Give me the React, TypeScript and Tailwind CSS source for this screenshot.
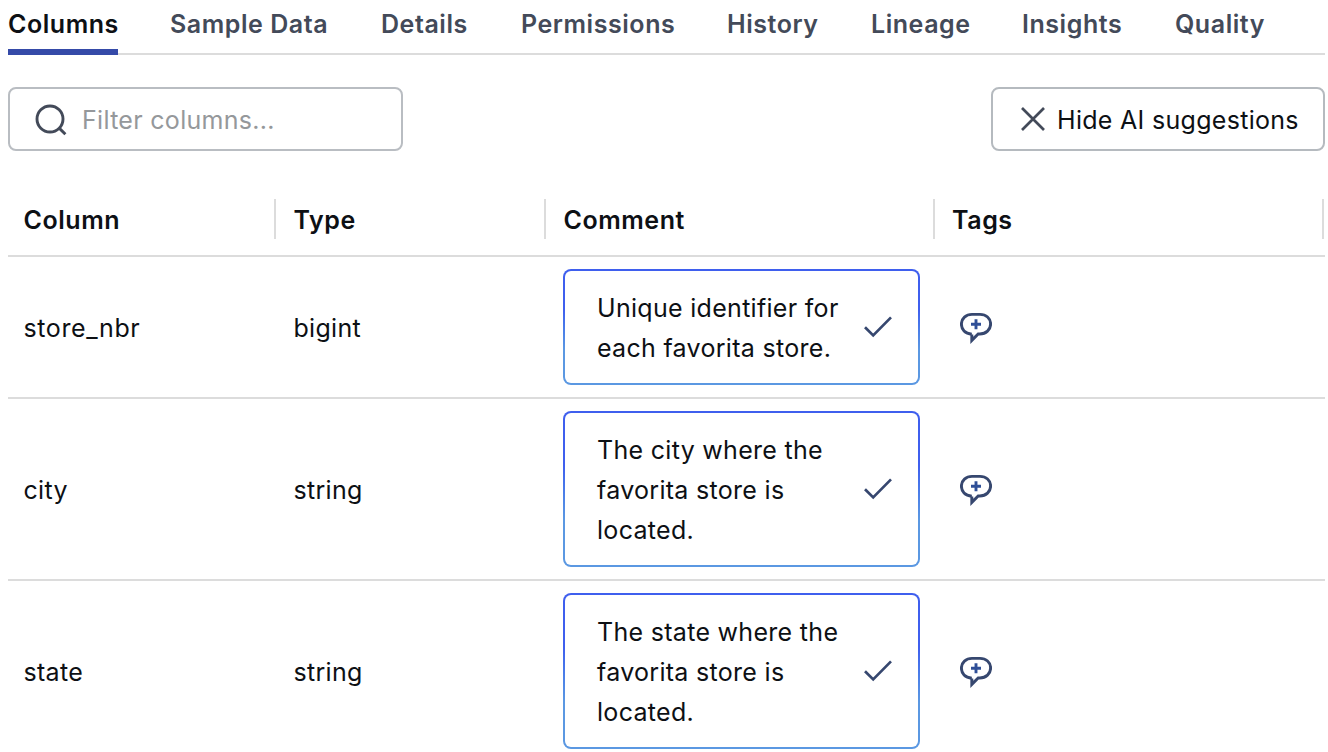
import React from "react";

const tabs = [
  { label: "Columns", width: "w-[110px]", gap: "mr-[52px]", active: true },
  { label: "Sample Data", width: "w-[159px]", gap: "mr-[52px]" },
  { label: "Details", width: "w-[87px]", gap: "mr-[53px]" },
  { label: "Permissions", width: "w-[153px]", gap: "mr-[53px]" },
  { label: "History", width: "w-[91px]", gap: "mr-[53px]" },
  { label: "Lineage", width: "w-[98px]", gap: "mr-[53px]" },
  { label: "Insights", width: "w-[101px]", gap: "mr-[52px]" },
  { label: "Quality", width: "w-[89px]", gap: "" },
];

const rows = [
  { name: "store_nbr", spacing: "tracking-[0.6px]", type: "bigint", lines: ["Unique identifier for", "each favorita store."] },
  { name: "city", spacing: "", type: "string", lines: ["The city where the", "favorita store is", "located."] },
  { name: "state", spacing: "", type: "string", lines: ["The state where the", "favorita store is", "located."] },
];

const columns = "grid grid-cols-[270px_270px_389px_1fr]";

function SearchIcon() {
  return (
    <svg className="mt-0.5 h-8 w-8 shrink-0" viewBox="0 0 32 32" fill="none" stroke="#434a59" strokeWidth="2.9">
      <circle cx="15" cy="15" r="13" />
      <path d="M24.2 24.1 L30.4 30.2" />
    </svg>
  );
}

function CloseIcon() {
  return (
    <svg className="h-6 w-6 shrink-0" viewBox="0 0 24 24" fill="none" stroke="#434a59" strokeWidth="2.7">
      <path d="M1 1 L23 23 M23 1 L1 23" />
    </svg>
  );
}

function CheckIcon() {
  return (
    <svg className="h-[22px] w-7 shrink-0" viewBox="0 0 28 22" fill="none" stroke="#36476f" strokeWidth="2.7">
      <path d="M1 11.2 L9.2 19.4 L27 1.4" />
    </svg>
  );
}

function AddTagIcon() {
  return (
    <svg className="mt-0.5 h-8 w-8" viewBox="0 0 32 32" fill="none" stroke="#36476f" strokeWidth="2.9">
      <path d="M11.8 22.6 V28.4 L18.2 22 H19.8 C26 22 30.6 17.7 30.6 12 C30.6 6.2 26 2.4 20 2.4 H12 C6 2.4 1.4 6.4 1.4 12.1 C1.4 17.4 5 21.6 11.8 22.2" />
      <path d="M16 7.3 V17.3 M11 12.3 H21" stroke="#2f4f97" />
    </svg>
  );
}

export default function App() {
  return (
    <div className="flex h-[752px] w-[1328px] flex-col overflow-hidden bg-white pl-2 pr-[3px] font-['Inter',sans-serif] text-[25px] leading-[40px] tracking-[0.3px] text-[#0d1014]">
      <nav className="flex h-[55px] shrink-0 border-b-2 border-[#dcdcdc] font-semibold tracking-[0.55px] text-[#434a59]">
        {tabs.map((tab) => (
          <a
            key={tab.label}
            className={`${tab.width} ${tab.gap} flex h-[55px] shrink-0 flex-col whitespace-nowrap pt-1 ${tab.active ? "border-b-6 border-[#354aa8] text-[#0d1014]" : ""}`}
          >
            {tab.label}
          </a>
        ))}
      </nav>

      <div className="mt-8 flex h-16 shrink-0 justify-between">
        <label className="flex w-[395px] items-center rounded-lg border-2 border-[#b9bdc2] pl-[25px]">
          <SearchIcon />
          <input
            className="ml-[15px] w-[280px] bg-transparent pt-0.5 outline-none placeholder:text-[#95989b]"
            placeholder="Filter columns..."
          />
        </label>
        <button className="flex w-[334px] items-center rounded-lg border-2 border-[#b5babf] pl-7">
          <CloseIcon />
          <span className="ml-3 whitespace-nowrap pt-0.5">Hide AI suggestions</span>
        </button>
      </div>

      <div className={`${columns} mt-8 h-[74px] shrink-0 border-b-2 border-[#dcdcdc] pt-4 font-semibold tracking-[0.55px]`}>
        <div className="h-10 w-[268px] border-r-2 border-[#dcdcdc] pl-[15.5px] pt-px">Column</div>
        <div className="h-10 w-[268px] border-r-2 border-[#dcdcdc] pl-[15.5px] pt-px">Type</div>
        <div className="h-10 w-[387px] border-r-2 border-[#dcdcdc] pl-[15.5px] pt-px">Comment</div>
        <div className="mr-px h-10 border-r-2 border-[#dcdcdc] pl-[15px] pt-px">Tags</div>
      </div>

      {rows.map((row) => (
        <div key={row.name} className={`${columns} shrink-0 items-center border-b-2 border-[#dcdcdc] py-3`}>
          <div className={`pl-[15.5px] pt-0.5 ${row.spacing}`}>{row.name}</div>
          <div className="pl-[15.5px] pt-0.5">{row.type}</div>
          <div className="pl-[15px]">
            <div className="w-[357px] rounded-lg bg-linear-to-b from-[#3f5fee] from-35% to-[#5b98e2] to-70% p-0.5">
              <div className="flex items-center justify-between rounded-md bg-white py-4 pl-8 pr-[26px]">
                <div className="-mb-px pt-px">
                  {row.lines.map((line) => (
                    <div key={line} className="whitespace-nowrap">{line}</div>
                  ))}
                </div>
                <CheckIcon />
              </div>
            </div>
          </div>
          <div className="pl-[23px]">
            <AddTagIcon />
          </div>
        </div>
      ))}
    </div>
  );
}
